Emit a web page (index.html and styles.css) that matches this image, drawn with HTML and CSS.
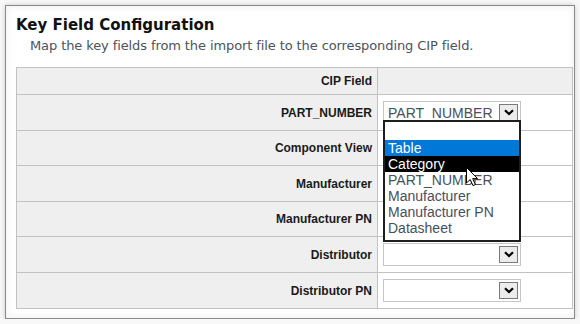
FILE: index.html
```html
<!DOCTYPE html>
<html lang="en">
<head>
  <meta charset="UTF-8">
  <title>Key Field Configuration</title>
  <link rel="stylesheet" href="styles.css">
</head>
<body>
  <div class="panel">
    <h2 class="panel-title">Key Field Configuration</h2>
    <p class="panel-desc">Map the key fields from the import file to the corresponding CIP field.</p>

    <table class="map-table">
      <tr class="head">
        <th>CIP Field</th>
        <th></th>
      </tr>
      <tr>
        <th>PART_NUMBER</th>
        <td>
          <div class="select open">
            <span class="select-value">PART_NUMBER</span>
            <span class="select-arrow">
              <svg viewBox="0 0 10 7" width="10" height="7"><path d="M1 1.2 L5 5 L9 1.2" /></svg>
            </span>
            <ul class="select-list">
              <li class="blank"></li>
              <li class="active">Table</li>
              <li class="hover">Category</li>
              <li>PART_NUMBER</li>
              <li>Manufacturer</li>
              <li>Manufacturer PN</li>
              <li>Datasheet</li>
            </ul>
            <svg class="cursor" viewBox="0 0 13 20" width="13" height="20">
              <path d="M0.5 0.5 L0.5 16 L4.2 12.6 L7 18.6 L9.4 17.6 L6.7 11.6 L11.6 11.6 Z" />
            </svg>
          </div>
        </td>
      </tr>
      <tr class="short">
        <th>Component View</th>
        <td></td>
      </tr>
      <tr>
        <th>Manufacturer</th>
        <td></td>
      </tr>
      <tr class="short">
        <th>Manufacturer PN</th>
        <td></td>
      </tr>
      <tr>
        <th>Distributor</th>
        <td>
          <div class="select">
            <span class="select-value"></span>
            <span class="select-arrow">
              <svg viewBox="0 0 10 7" width="10" height="7"><path d="M1 1.2 L5 5 L9 1.2" /></svg>
            </span>
          </div>
        </td>
      </tr>
      <tr>
        <th>Distributor PN</th>
        <td>
          <div class="select">
            <span class="select-value"></span>
            <span class="select-arrow">
              <svg viewBox="0 0 10 7" width="10" height="7"><path d="M1 1.2 L5 5 L9 1.2" /></svg>
            </span>
          </div>
        </td>
      </tr>
    </table>
  </div>
</body>
</html>
```

FILE: styles.css
```css
* {
  margin: 0;
  padding: 0;
  box-sizing: border-box;
}

body {
  background: #f8f8f8;
  font-family: "Liberation Sans", Arial, sans-serif;
  color: #1a1a1a;
}

.panel {
  margin: 5px 5px 0 5px;
  width: 570px;
  height: 314px;
  padding: 9px 0 0 10px;
  background: #ffffff;
  border: 1px solid #8a8a8a;
  box-shadow: 0 0 5px rgba(0, 0, 0, 0.18), inset 0 0 8px rgba(0, 0, 0, 0.07);
  overflow: hidden;
}

.panel-title {
  font-family: "DejaVu Sans", Verdana, sans-serif;
  font-size: 15px;
  line-height: 20px;
  font-weight: 700;
  color: #111111;
}

.panel-desc {
  margin-top: 3px;
  padding-left: 14px;
  font-family: "DejaVu Sans", Verdana, sans-serif;
  font-size: 13px;
  letter-spacing: -0.1px;
  line-height: 16px;
  color: #4c5260;
}

.map-table {
  margin-top: 13px;
  width: 557px;
  border-collapse: collapse;
  border: 1px solid #c2c2c2;
}

.map-table th,
.map-table td {
  border: 1px solid #c2c2c2;
  height: 36px;
  vertical-align: middle;
}

.map-table .short th,
.map-table .short td {
  height: 35px;
}

.map-table th:first-child {
  width: 361px;
  padding-right: 5px;
  text-align: right;
  font-size: 12px;
  font-weight: 700;
  background: #efefef;
  color: #1a1a1a;
}

.map-table td {
  background: #ffffff;
  padding-left: 5px;
}

.map-table .head th {
  height: 27px;
  background: #efefef;
}

/* fake select box */
.select {
  position: relative;
  display: flex;
  align-items: center;
  width: 138px;
  height: 23px;
  border: 1px solid #c6c6c6;
  background: #ffffff;
}

.select-value {
  flex: 1;
  padding-left: 4px;
  font-size: 14px;
  color: #4a4f5a;
  white-space: nowrap;
  overflow: hidden;
}

.select-arrow {
  display: flex;
  align-items: center;
  justify-content: center;
  width: 19px;
  height: 17px;
  margin-right: 2px;
  border: 1px solid #7a7a7a;
  background: #ececec;
}

.select-arrow svg path {
  fill: none;
  stroke: #000000;
  stroke-width: 2.2;
}

.select-list {
  position: absolute;
  top: 18px;
  left: -1px;
  width: 138px;
  padding-bottom: 4px;
  list-style: none;
  background: #ffffff;
  border: 2px solid #1e1e1e;
  z-index: 5;
}

.select-list li {
  height: 16px;
  line-height: 16px;
  padding-left: 3px;
  font-size: 14px;
  color: #4a4f5a;
  white-space: nowrap;
}

.select-list li.blank {
  height: 18px;
}

.select-list li.active {
  background: #0078d7;
  color: #ffffff;
}

.select-list li.hover {
  background: #000000;
  color: #ffffff;
}

.cursor {
  position: absolute;
  left: 82px;
  top: 65px;
  z-index: 6;
}

.cursor path {
  fill: #ffffff;
  stroke: #000000;
  stroke-width: 1;
}
```
